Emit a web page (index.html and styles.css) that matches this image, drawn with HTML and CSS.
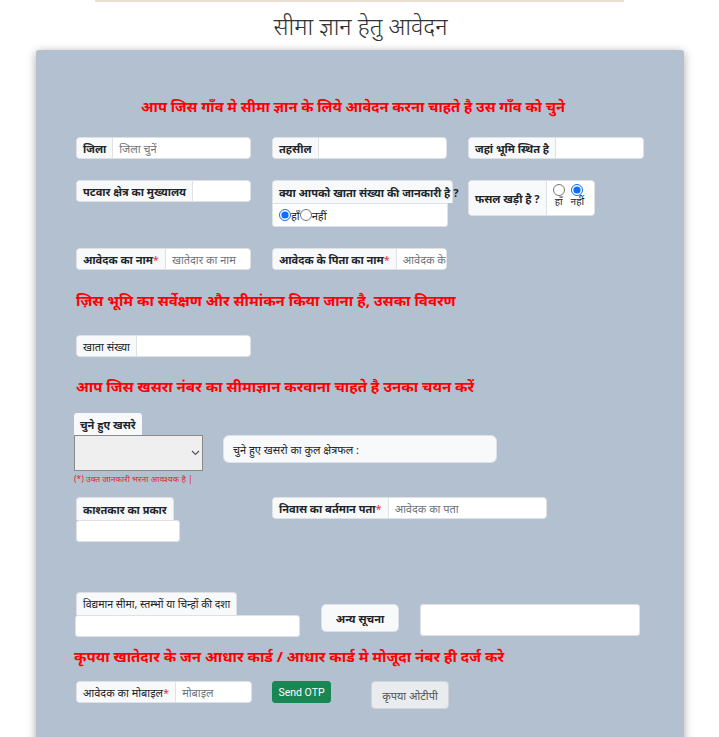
FILE: index.html
```html
<!DOCTYPE html>
<html lang="hi">
<head>
<meta charset="utf-8">
<title>सीमा ज्ञान हेतु आवेदन</title>
<link rel="stylesheet" href="styles.css">
</head>
<body>
<div class="topbar"></div>
<h1 class="title">सीमा ज्ञान हेतु आवेदन</h1>
<div class="card">
  <h2 class="heading center">आप जिस गाँव मे सीमा ज्ञान के लिये आवेदन करना चाहते है उस गाँव को चुने</h2>

  <div class="grid row1">
    <div class="ig"><span class="ig-label">जिला</span><span class="ig-input ph">जिला चुनें</span></div>
    <div class="ig"><span class="ig-label">तहसील</span><span class="ig-input"></span></div>
    <div class="ig"><span class="ig-label">जहां भूमि स्थित है</span><span class="ig-input"></span></div>
  </div>

  <div class="grid row2">
    <div class="ig"><span class="ig-label">पटवार क्षेत्र का मुख्यालय</span><span class="ig-input"></span></div>
    <div class="stack">
      <span class="ig-label solo wide">क्या आपको खाता संख्या की जानकारी है ?</span>
      <div class="radio-box"><input type="radio" name="k" checked><span>हाँ</span><input type="radio" name="k"><span>नहीं</span></div>
    </div>
    <div class="ig tall">
      <span class="ig-label">फसल खड़ी है ?</span>
      <div class="radio-col">
        <label class="rc"><input type="radio" name="f"><span>हाँ</span></label>
        <label class="rc"><input type="radio" name="f" checked><span>नहीं</span></label>
      </div>
    </div>
  </div>

  <div class="grid row3">
    <div class="ig"><span class="ig-label">आवेदक का नाम<i class="req">*</i></span><span class="ig-input ph">खातेदार का नाम</span></div>
    <div class="ig"><span class="ig-label">आवेदक के पिता का नाम<i class="req">*</i></span><span class="ig-input ph clip">आवेदक के पि</span></div>
  </div>

  <h2 class="heading h2">ज़िस भूमि का सर्वेक्षण और सीमांकन किया जाना है, उसका विवरण</h2>

  <div class="grid row4">
    <div class="ig"><span class="ig-label normal">खाता संख्या</span><span class="ig-input"></span></div>
  </div>

  <h2 class="heading h3">आप जिस खसरा नंबर का सीमाज्ञान करवाना चाहते है उनका चयन करें</h2>

  <div class="khasra-row">
    <div class="khasra-col">
      <span class="tab-label">चुने हुए खसरे</span>
      <div class="select"><svg width="9" height="6" viewBox="0 0 9 6"><path d="M1 1l3.5 3.5L8 1" fill="none" stroke="#555" stroke-width="1.2"/></svg></div>
      <div class="err">(*) उक्त जानकारी भरना आवश्यक है |</div>
    </div>
    <div class="area-box">चुने हुए खसरो का कुल क्षेत्रफल :</div>
  </div>

  <div class="grid row5">
    <div class="stack">
      <span class="ig-label solo">काश्तकार का प्रकार</span>
      <span class="plain-input w103"></span>
    </div>
    <div class="ig w274"><span class="ig-label">निवास का बर्तमान पता<i class="req">*</i></span><span class="ig-input ph">आवेदक का पता</span></div>
  </div>

  <div class="row6">
    <div class="stack">
      <span class="ig-label solo normal small">विद्यमान सीमा, स्तम्भों या चिन्हों की दशा</span>
      <span class="plain-input w224"></span>
    </div>
    <span class="pill">अन्य सूचना</span>
    <span class="plain-input other"></span>
  </div>

  <h2 class="heading h4">कृपया खातेदार के जन आधार कार्ड / आधार कार्ड मे मोजूदा नंबर ही दर्ज करे</h2>

  <div class="row7">
    <div class="ig w175"><span class="ig-label normal">आवेदक का मोबाइल<i class="req">*</i></span><span class="ig-input ph">मोबाइल</span></div>
    <button class="btn-otp" type="button">Send OTP</button>
    <span class="otp-box">कृपया ओटीपी</span>
  </div>
</div>
</body>
</html>
```

FILE: styles.css
```css
* { box-sizing: border-box; }
html, body { margin: 0; padding: 0; background: #fff; }
body {
  font-family: "Noto Sans", "Noto Sans Devanagari", "Lohit Devanagari", sans-serif;
  color: #212529;
  font-size: 12px;
  height: 737px;
  overflow: hidden;
}
.topbar {
  width: 529px;
  height: 2px;
  margin: 0 auto;
  background: #e8ded2;
}
.title {
  margin: 8px 0 0;
  height: 40px;
  text-align: center;
  font-size: 23.5px;
  font-weight: 300;
  line-height: 32px;
  color: #333;
  padding-left: 2px;
}
.card {
  margin-left: 36px;
  width: 648px;
  height: 720px;
  background: #b3c0d0;
  box-shadow: 0 2px 10px rgba(0,0,0,0.35);
  border-radius: 3px;
  padding: 1px 0 0 40px;
}
.heading {
  margin: 0;
  color: #ff0000;
  font-size: 15px;
  font-weight: 700;
  line-height: 20px;
}
.heading.center { text-align: center; margin: 45px 0 0 -40px; padding-right: 14px; font-size: 14.7px; }
.grid {
  display: grid;
  grid-template-columns: 175px 175px 176px;
  column-gap: 21px;
  align-items: start;
}
.row1 { margin-top: 21px; }
.row2 { margin-top: 21px; }
.row3 { margin-top: 21px; }
.row4 { margin-top: 25px; }
.h2 { margin-top: 20px; }
.h3 { margin-top: 19px; }
.h4 { margin-top: 9px; margin-left: -2px; }

.ig {
  display: flex;
  height: 22px;
  border: 1px solid #dee2e6;
  border-radius: 4px;
  background: #fff;
  overflow: hidden;
}
.ig.tall { height: 36px; width: 127px; }
.ig-label {
  display: flex;
  align-items: center;
  padding: 0 6px;
  background: #f8f9fa;
  border-right: 1px solid #dee2e6;
  font-weight: 700;
  font-size: 11px;
  white-space: nowrap;
  color: #212529;
}
.ig-label.normal { font-weight: 400; }
.ig-label.small { font-size: 10.5px; }
.req { color: #dc3545; font-style: normal; font-weight: 400; }
.ig-input {
  flex: 1;
  display: flex;
  align-items: center;
  padding: 0 6px;
  font-size: 11px;
  white-space: nowrap;
  overflow: hidden;
  background: #fff;
}
.ig-input.ph { color: #6c757d; }

.stack { display: flex; flex-direction: column; align-items: flex-start; }
.ig-label.solo {
  height: 23px;
  border: 1px solid #dee2e6;
  border-bottom: none;
  border-radius: 4px 4px 0 0;
}
.ig-label.wide { width: 181px; }
.radio-box {
  display: flex;
  align-items: center;
  width: 176px;
  height: 24px;
  background: #fff;
  border: 1px solid #dee2e6;
  border-radius: 0 0 3px 3px;
  padding: 0 6px;
  font-size: 11px;
}
.radio-box input { margin: 0; width: 12px; height: 12px; accent-color: #0d6efd; }
.radio-col {
  display: flex;
  gap: 6px;
  padding: 0 6px;
  align-items: flex-start;
  background: #fff;
  flex: 1;
}
.rc { display: flex; flex-direction: column; align-items: center; font-size: 10px; line-height: 11px; }
.rc input { margin: 3px 0 0; width: 12px; height: 12px; accent-color: #0d6efd; }

.khasra-row {
  display: flex;
  align-items: flex-start;
  margin: 17px 0 0 -2px;
  gap: 21px;
}
.khasra-col { display: flex; flex-direction: column; align-items: flex-start; width: 128px; }
.tab-label {
  height: 22px;
  display: flex;
  align-items: center;
  padding: 0 6px;
  background: #f8f9fa;
  border-radius: 3px 3px 0 0;
  font-weight: 700;
  font-size: 11px;
}
.select {
  width: 129px;
  height: 36px;
  background: #efefef;
  border: 1px solid #8a8a8a;
  display: flex;
  align-items: center;
  justify-content: flex-end;
  padding-right: 2px;
}
.err { margin-top: 2px; font-size: 8.5px; color: #e0262e; line-height: 12px; white-space: nowrap; }
.area-box {
  margin-top: 22px;
  width: 274px;
  height: 28px;
  background: #f8f9fa;
  border: 1px solid #dee2e6;
  border-radius: 6px;
  display: flex;
  align-items: center;
  padding-left: 9px;
  font-size: 11px;
}
.row5 { margin-top: 12px; }
.plain-input {
  display: block;
  height: 22px;
  background: #fff;
  border: 1px solid #dee2e6;
  border-radius: 3px;
}
.w103 { width: 104px; }
.w224 { width: 225px; margin-left: -1px; }
.w274 { width: 275px; }
.w175 { width: 176px; }

.row6 {
  display: flex;
  align-items: flex-start;
  margin-top: 50px;
}
.row6 .stack { width: 245px; }
.pill {
  margin-top: 12px;
  height: 28px;
  width: 78px;
  display: flex;
  align-items: center;
  justify-content: center;
  background: #f8f9fa;
  border: 1px solid #dee2e6;
  border-radius: 5px;
  font-weight: 700;
  font-size: 11px;
}
.plain-input.other { margin-top: 12px; margin-left: 21px; width: 220px; height: 32px; }

.row7 {
  display: flex;
  align-items: flex-start;
  margin-top: 15px;
}
.btn-otp {
  margin-left: 20px;
  width: 59px;
  height: 22px;
  padding: 0;
  background: #198754;
  color: #fff;
  border: 1px solid #198754;
  border-radius: 3px;
  font-family: Roboto, "Noto Sans", sans-serif;
  font-size: 10.5px;
}
.otp-box {
  margin-left: 40px;
  width: 78px;
  height: 28px;
  display: flex;
  align-items: center;
  justify-content: center;
  background: #e9ecef;
  border: 1px solid #ced4da;
  border-radius: 4px;
  color: #555;
  font-size: 11px;
}
```
